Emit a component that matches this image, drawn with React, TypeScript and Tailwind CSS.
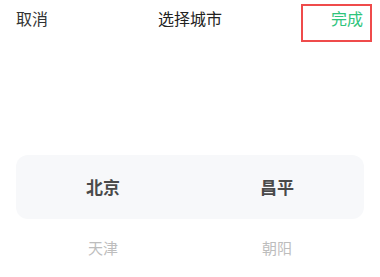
const cjk = "font-['Noto_Sans_CJK_SC',sans-serif]";

export default function App() {
  return (
    <div className={`relative h-[277px] w-[380px] overflow-hidden bg-white ${cjk}`}>
      <div className="grid h-9 grid-cols-[1fr_auto_1fr] items-center text-[16px] leading-none">
        <span className="ml-4 text-[#333333]">取消</span>
        <span className="text-[#222222]">选择城市</span>
        <span className="mr-[17px] justify-self-end text-[#2fc47c]">完成</span>
      </div>
      <div className="pointer-events-none absolute left-[301px] top-[4px] h-[38px] w-[71px] border-2 border-[#ef4b4b]" />

      <div className="mx-4 mt-[119px] grid h-16 grid-cols-2 items-center rounded-xl bg-[#f7f8fa] text-[17px] font-bold text-[#4a4a4a]">
        <span className="text-center">北京</span>
        <span className="text-center">昌平</span>
      </div>
      <div className="mx-4 grid h-[58px] grid-cols-2 items-center text-[15px] text-[#bdbdbd]">
        <span className="text-center">天津</span>
        <span className="text-center">朝阳</span>
      </div>
    </div>
  );
}
